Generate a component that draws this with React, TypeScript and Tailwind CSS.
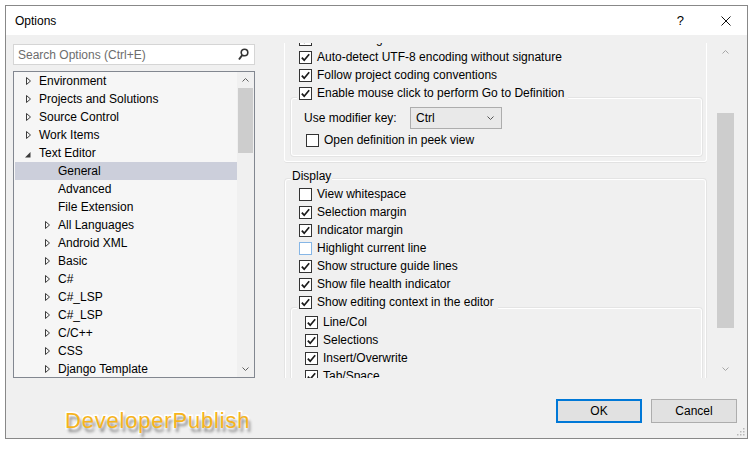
import React from "react";

function Chevron({ dir, color }: { dir: "up" | "down"; color: string }) {
  return (
    <svg width="7" height="4" viewBox="0 0 7 4" className="block">
      <path
        d={dir === "up" ? "M0.5 3.5 L3.5 0.5 L6.5 3.5" : "M0.5 0.5 L3.5 3.5 L6.5 0.5"}
        stroke={color}
        strokeWidth="1"
        fill="none"
      />
    </svg>
  );
}

function CheckBox({ checked, hover }: { checked?: boolean; hover?: boolean }) {
  return (
    <span
      className={
        hover
          ? "w-[13px] h-[13px] border border-[#86b6e6] bg-white flex items-center justify-center shrink-0"
          : "w-[13px] h-[13px] border border-[#333333] bg-white flex items-center justify-center shrink-0"
      }
    >
      {checked && (
        <svg width="11" height="11" viewBox="0 0 11 11" className="block">
          <path d="M1.8 5.6 L4.2 8.2 L9.2 2.2" stroke="#1a1a1a" strokeWidth="1.7" fill="none" />
        </svg>
      )}
    </span>
  );
}

function Row({ label, checked, hover }: { label: string; checked?: boolean; hover?: boolean }) {
  return (
    <div className="h-[18px] flex items-center gap-[5px] whitespace-nowrap">
      <CheckBox checked={checked} hover={hover} />
      <span>{label}</span>
    </div>
  );
}

type TreeItem = { label: string; level: number; kind: "collapsed" | "expanded" | "leaf"; selected?: boolean };

const tree: TreeItem[] = [
  { label: "Environment", level: 0, kind: "collapsed" },
  { label: "Projects and Solutions", level: 0, kind: "collapsed" },
  { label: "Source Control", level: 0, kind: "collapsed" },
  { label: "Work Items", level: 0, kind: "collapsed" },
  { label: "Text Editor", level: 0, kind: "expanded" },
  { label: "General", level: 1, kind: "leaf", selected: true },
  { label: "Advanced", level: 1, kind: "leaf" },
  { label: "File Extension", level: 1, kind: "leaf" },
  { label: "All Languages", level: 1, kind: "collapsed" },
  { label: "Android XML", level: 1, kind: "collapsed" },
  { label: "Basic", level: 1, kind: "collapsed" },
  { label: "C#", level: 1, kind: "collapsed" },
  { label: "C#_LSP", level: 1, kind: "collapsed" },
  { label: "C#_LSP", level: 1, kind: "collapsed" },
  { label: "C/C++", level: 1, kind: "collapsed" },
  { label: "CSS", level: 1, kind: "collapsed" },
  { label: "Django Template", level: 1, kind: "collapsed" },
  { label: "F#", level: 1, kind: "collapsed" },
];

function TreeRow({ item }: { item: TreeItem }) {
  return (
    <div
      className={
        item.selected
          ? "h-[18px] flex items-center whitespace-nowrap bg-[#cccfdb]"
          : "h-[18px] flex items-center whitespace-nowrap"
      }
    >
      <span className={item.level === 0 ? "w-[11px] shrink-0" : "w-[30px] shrink-0"} />
      <span className="w-[13px] shrink-0 flex items-center">
        {item.kind === "collapsed" && (
          <svg width="5" height="8" viewBox="0 0 5 8" className="block">
            <path d="M0.5 0.5 L4.5 4 L0.5 7.5 Z" stroke="#3c3c3c" strokeWidth="1" fill="none" />
          </svg>
        )}
        {item.kind === "expanded" && (
          <svg width="6" height="6" viewBox="0 0 6 6" className="block mt-[3px] -ml-[1px]">
            <path d="M5.5 0 L5.5 5.5 L0 5.5 Z" fill="#3c3c3c" />
          </svg>
        )}
      </span>
      <span>{item.label}</span>
    </div>
  );
}

export default function App() {
  return (
    <div className="w-[749px] h-[454px] bg-white overflow-hidden text-[12px] leading-[18px] text-black font-['Liberation_Sans',Arial,sans-serif]">
      <div className="relative ml-[5px] mt-[5px] w-[743px] h-[434px] border border-[#888888] bg-[#f0f0f0] flex flex-col">
        {/* Title bar */}
        <div className="h-[29px] bg-white flex items-center shrink-0">
          <span className="ml-[9px]">Options</span>
          <span className="ml-auto text-[13px]">?</span>
          <svg width="10" height="10" viewBox="0 0 10 10" className="block ml-[37px] mr-[16px]">
            <path d="M0.5 0.5 L9.5 9.5 M9.5 0.5 L0.5 9.5" stroke="#111" strokeWidth="1" />
          </svg>
        </div>

        {/* Body */}
        <div className="flex h-[343px] shrink-0">
          {/* Left column */}
          <div className="ml-[7px] mt-[9px] w-[242px] flex flex-col">
            <div className="h-[21px] border border-[#d5d5d5] bg-white flex items-center pl-[4px] pr-[5px]">
              <span className="text-[#6d6d6d]">Search Options (Ctrl+E)</span>
              <svg width="11" height="13" viewBox="0 0 11 13" className="block ml-auto">
                <circle cx="6.5" cy="4.5" r="3.3" stroke="#333" strokeWidth="1.6" fill="none" />
                <path d="M4.3 7 L1 11.5" stroke="#333" strokeWidth="2" />
              </svg>
            </div>
            <div className="mt-[6px] h-[307px] border border-[#828790] bg-[#f6f6f6] flex overflow-hidden">
              <div className="ml-[1px] w-[222px] flex flex-col overflow-hidden">
                {tree.map((t, i) => (
                  <TreeRow key={i} item={t} />
                ))}
              </div>
              <div className="w-[17px] flex flex-col bg-[#f0f0f0]">
                <div className="h-[16px] flex items-center justify-center shrink-0">
                  <Chevron dir="up" color="#606060" />
                </div>
                <div className="h-[65px] mx-[1px] bg-[#cdcdcd] shrink-0" />
                <div className="flex-1" />
                <div className="h-[16px] flex items-center justify-center shrink-0">
                  <Chevron dir="down" color="#606060" />
                </div>
              </div>
            </div>
          </div>

          {/* Right scroll viewport */}
          <div className="ml-[29px] mt-[8px] w-[423px] h-[335px] overflow-hidden">
            {/* First group (scrolled) */}
            <div className="-mt-[13px] border border-t-0 border-white shadow-[0_1px_0_#e2e2e2] rounded-b-[3px] pl-[14px] pr-[5px] pb-[5px]">
              <Row label="Track changes" checked />
              <Row label="Auto-detect UTF-8 encoding without signature" checked />
              <Row label="Follow project coding conventions" checked />
              <div className="mt-[14px] -ml-[8px] -mr-[1px] border border-white shadow-[0_0_0_1px_#e4e4e4] rounded-[3px] pl-[12px] pb-[6px]">
                <div className="-mt-[15px] -ml-[7px] pl-[2px] pr-[4px] w-fit bg-[#f0f0f0]">
                  <Row label="Enable mouse click to perform Go to Definition" checked />
                </div>
                <div className="mt-[5px] h-[22px] flex items-center">
                  <span className="w-[106px]">Use modifier key:</span>
                  <div className="w-[92px] h-[22px] border border-[#adadad] bg-[#e9e9e9] flex items-center pl-[5px] pr-[7px]">
                    <span>Ctrl</span>
                    <span className="ml-auto">
                      <Chevron dir="down" color="#555" />
                    </span>
                  </div>
                </div>
                <div className="mt-[2px] ml-[2px]">
                  <Row label="Open definition in peek view" />
                </div>
              </div>
            </div>

            {/* Display group */}
            <div className="mt-[17px] mx-[1px] border border-white shadow-[0_0_0_1px_#e4e4e4] rounded-[3px] pl-[13px] pr-[5px]">
              <div className="-mt-[13px] -ml-[8px] w-fit h-[18px] flex items-center bg-[#f0f0f0] px-[1px]">
                Display
              </div>
              <Row label="View whitespace" />
              <Row label="Selection margin" checked />
              <Row label="Indicator margin" checked />
              <Row label="Highlight current line" hover />
              <Row label="Show structure guide lines" checked />
              <Row label="Show file health indicator" checked />
              <div className="mt-[15px] -ml-[8px] -mr-[2px] border border-white shadow-[0_0_0_1px_#e4e4e4] rounded-[3px] pl-[13px]">
                <div className="-mt-[16px] -ml-[8px] pl-[2px] pr-[4px] w-fit bg-[#f0f0f0]">
                  <Row label="Show editing context in the editor" checked />
                </div>
                <div className="mt-[2px]">
                  <Row label="Line/Col" checked />
                  <Row label="Selections" checked />
                  <Row label="Insert/Overwrite" checked />
                  <Row label="Tab/Space" checked />
                  <Row label="Line endings" checked />
                </div>
              </div>
            </div>
          </div>

          {/* Right scrollbar */}
          <div className="ml-[10px] mt-[8px] w-[17px] h-[335px] flex flex-col">
            <div className="h-[18px] flex items-center justify-center shrink-0">
              <Chevron dir="up" color="#a6a6a6" />
            </div>
            <div className="mt-[52px] h-[215px] bg-[#cdcdcd] shrink-0" />
            <div className="flex-1" />
            <div className="h-[18px] flex items-center justify-center shrink-0">
              <Chevron dir="down" color="#a6a6a6" />
            </div>
          </div>
        </div>

        {/* Footer */}
        <div className="flex justify-end gap-[9px] pt-[21px] pr-[10px]">
          <button className="w-[86px] h-[24px] border-2 border-[#0078d7] bg-[#e1e1e1] flex items-center justify-center">
            OK
          </button>
          <button className="w-[86px] h-[24px] border border-[#adadad] bg-[#e1e1e1] flex items-center justify-center">
            Cancel
          </button>
        </div>

        {/* Resize grip */}
        <svg width="8" height="8" viewBox="0 0 8 8" className="absolute right-[2px] bottom-[2px]">
          <rect x="6" y="0" width="1.5" height="1.5" fill="#b8b8b8" />
          <rect x="3" y="3" width="1.5" height="1.5" fill="#b8b8b8" />
          <rect x="6" y="3" width="1.5" height="1.5" fill="#b8b8b8" />
          <rect x="0" y="6" width="1.5" height="1.5" fill="#b8b8b8" />
          <rect x="3" y="6" width="1.5" height="1.5" fill="#b8b8b8" />
          <rect x="6" y="6" width="1.5" height="1.5" fill="#b8b8b8" />
        </svg>

        {/* Watermark */}
        <div className="absolute left-[59px] top-[404px] text-[22px] leading-none tracking-[0.8px] text-[#f6b41c] [-webkit-text-stroke:3px_white] [paint-order:stroke_fill] [text-shadow:2px_4px_3px_rgba(0,0,0,0.45)] whitespace-nowrap">
          DeveloperPublish
        </div>
      </div>
    </div>
  );
}
